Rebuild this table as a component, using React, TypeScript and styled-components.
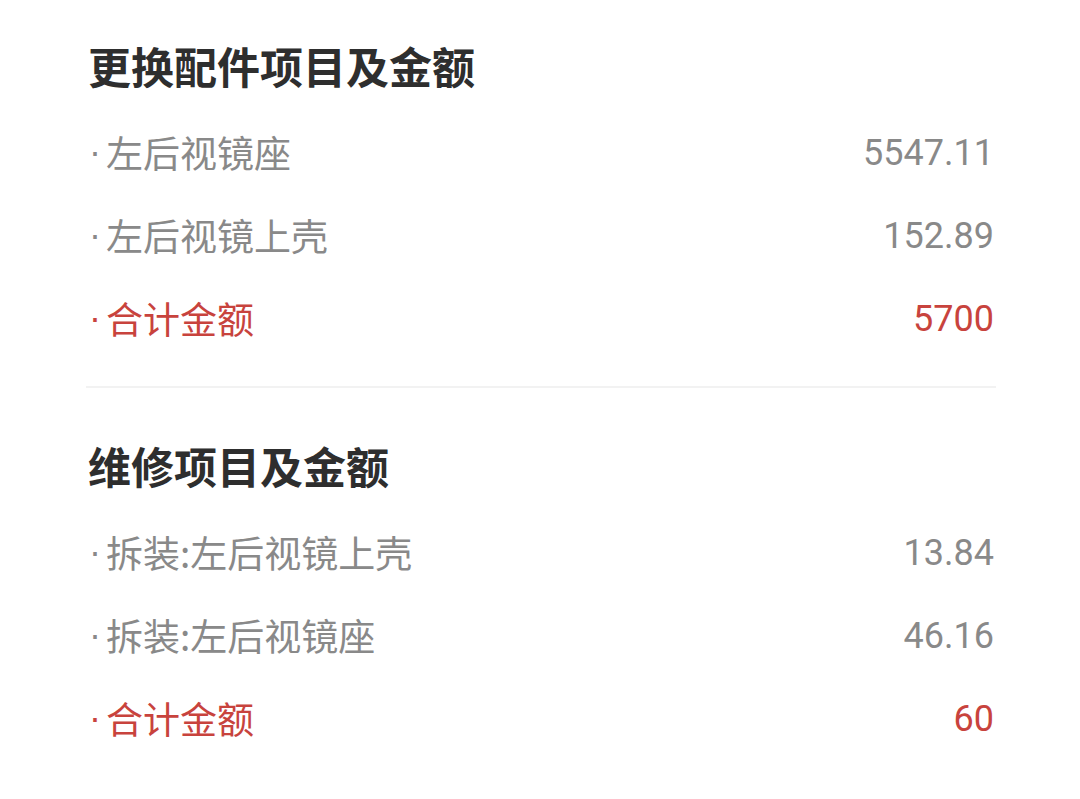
import React from "react";
import styled, { createGlobalStyle } from "styled-components";

type Item = { name: string; amount: string; total?: boolean };
type Group = { title: string; items: Item[] };

const groups: Group[] = [
  {
    title: "更换配件项目及金额",
    items: [
      { name: "左后视镜座", amount: "5547.11" },
      { name: "左后视镜上壳", amount: "152.89" },
      { name: "合计金额", amount: "5700", total: true },
    ],
  },
  {
    title: "维修项目及金额",
    items: [
      { name: "拆装:左后视镜上壳", amount: "13.84" },
      { name: "拆装:左后视镜座", amount: "46.16" },
      { name: "合计金额", amount: "60", total: true },
    ],
  },
];

const App: React.FC = () => {
  return (
    <>
      <GlobalStyle />
      <Page>
        {groups.map((group, i) => (
          <React.Fragment key={group.title}>
            {i > 0 && <Divider />}
            <Section>
              <Title>{group.title}</Title>
              <List>
                {group.items.map((item) => (
                  <Row key={item.name} $total={item.total}>
                    <Name>
                      <Dot>·</Dot>
                      {item.name}
                    </Name>
                    <Amount>{item.amount}</Amount>
                  </Row>
                ))}
              </List>
            </Section>
          </React.Fragment>
        ))}
      </Page>
    </>
  );
};

const GlobalStyle = createGlobalStyle`
  body {
    margin: 0;
    background: #ffffff;
    font-family: "Noto Sans CJK SC", "Noto Sans", sans-serif;
  }
`;

const Page = styled.div`
  width: 1080px;
  box-sizing: border-box;
  padding: 35px 86px 0 88px;
`;

const Section = styled.section`
  display: flex;
  flex-direction: column;
`;

const Title = styled.h2`
  margin: 0;
  height: 60px;
  line-height: 60px;
  font-size: 43px;
  font-weight: 700;
  color: #2e2e2e;
`;

const List = styled.div`
  margin-top: 15px;
  display: flex;
  flex-direction: column;
`;

const Row = styled.div<{ $total?: boolean }>`
  height: 83px;
  display: flex;
  align-items: center;
  justify-content: space-between;
  font-size: 37px;
  color: ${(p) => (p.$total ? "#c8433d" : "#898989")};
`;

const Name = styled.div`
  display: flex;
  align-items: center;
`;

const Dot = styled.span`
  display: inline-block;
  width: 17px;
  margin-left: 1px;
  font-family: "Liberation Sans", sans-serif;
  font-size: 36px;
  text-align: left;
`;

const Amount = styled.div`
  font-family: "Roboto", sans-serif;
  font-size: 36px;
  padding-top: 2px;
`;

const Divider = styled.hr`
  margin: 27px -2px 47px -2px;
  border: none;
  height: 2px;
  background: #f2f2f2;
`;

export default App;
